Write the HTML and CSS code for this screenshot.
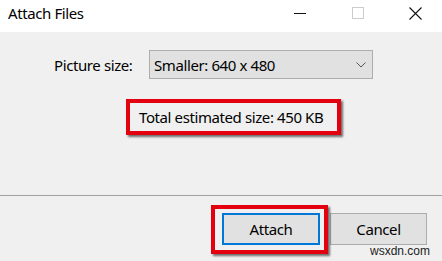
FILE: index.html
```html
<!DOCTYPE html>
<html lang="en">
<head>
<meta charset="utf-8">
<title>Attach Files</title>
<link rel="stylesheet" href="styles.css">
</head>
<body>
<div class="window">
  <header class="titlebar">
    <span class="title">Attach Files</span>
    <div class="controls">
      <span class="ctl">
        <svg width="12" height="1" viewBox="0 0 12 1"><rect x="0" y="0" width="12" height="1" fill="#111"/></svg>
      </span>
      <span class="ctl">
        <svg width="12" height="12" viewBox="0 0 12 12"><rect x="0.5" y="0.5" width="11" height="11" fill="none" stroke="#cccccc" stroke-width="1"/></svg>
      </span>
      <span class="ctl ctl-close">
        <svg width="13" height="13" viewBox="0 0 13 13"><path d="M0.5 0.5 L12.5 12.5 M12.5 0.5 L0.5 12.5" stroke="#111" stroke-width="1.1" fill="none"/></svg>
      </span>
    </div>
  </header>
  <main class="content">
    <div class="row">
      <span class="label">Picture size:</span>
      <div class="select">
        <span class="select-text">Smaller: 640 x 480</span>
        <svg class="chevron" width="10" height="6" viewBox="0 0 10 6"><path d="M0.5 0.5 L5 5 L9.5 0.5" stroke="#555" stroke-width="1" fill="none"/></svg>
      </div>
    </div>
    <div class="estimate">Total estimated size: 450 KB</div>
  </main>
  <footer class="footer">
    <span class="btn-wrap">
      <button class="btn btn-default">Attach</button>
    </span>
    <button class="btn">Cancel</button>
    <span class="watermark">wsxdn.com</span>
  </footer>
</div>
</body>
</html>
```
FILE: styles.css
```css
* { box-sizing: border-box; }
html, body { margin: 0; padding: 0; }
body {
  width: 442px;
  height: 261px;
  overflow: hidden;
  font-family: "Noto Sans", "Open Sans", sans-serif;
  font-size: 15px;
  letter-spacing: -0.4px;
  color: #000;
  background: #f0f0f0;
}
.window {
  display: flex;
  flex-direction: column;
  height: 261px;
}
.titlebar {
  height: 32px;
  flex: none;
  background: #fff;
  display: flex;
  align-items: flex-start;
  position: relative;
}
.title {
  padding-left: 8px;
  line-height: 20px;
  margin-top: 3px;
  color: #000;
}
.controls {
  margin-left: auto;
  display: flex;
}
.ctl {
  width: 58px;
  height: 26px;
  display: flex;
  align-items: center;
  justify-content: center;
}
.ctl-close { width: 55px; justify-content: flex-start; padding-left: 22px; }
.content {
  flex: 1;
  padding-top: 18px;
}
.row {
  display: flex;
  align-items: center;
  padding-left: 54px;
  height: 29px;
}
.label { width: 95px; }
.select {
  width: 224px;
  height: 29px;
  border: 1px solid #adadad;
  background: #e1e1e1;
  display: flex;
  align-items: center;
  padding-left: 4px;
  padding-right: 6px;
}
.select-text { flex: 1; }
.chevron { margin-top: 1px; }
.estimate {
  margin-top: 20px;
  margin-left: 126px;
  width: 215px;
  height: 36px;
  border: 4px solid #e3000f;
  box-shadow: 2px 2px 2px rgba(0,0,0,0.55);
  padding-left: 9px;
  display: flex;
  align-items: center;
}
.footer {
  flex: none;
  height: 66px;
  border-top: 1px solid #a0a0a0;
  display: flex;
  justify-content: flex-end;
  align-items: flex-start;
  gap: 10px;
  padding-top: 17px;
  padding-right: 15px;
  position: relative;
}
.btn {
  width: 97px;
  height: 32px;
  border: 1px solid #adadad;
  background: #e1e1e1;
  font-family: inherit;
  font-size: 15px;
  letter-spacing: -0.4px;
  color: #000;
  padding: 0;
  margin: 0;
}
.btn-default {
  border: 2px solid #0078d7;
  width: 98px;
}
.btn-wrap {
  position: relative;
  display: block;
  height: 32px;
}
.btn-wrap::after {
  content: "";
  position: absolute;
  left: -11px;
  top: -8px;
  right: -8px;
  bottom: -9px;
  border: 4px solid #e3000f;
  box-shadow: 2px 2px 2px rgba(0,0,0,0.55);
  pointer-events: none;
}
.watermark {
  position: absolute;
  right: 12px;
  top: 49px;
  line-height: 12px;
  font-family: "Liberation Sans", Arial, sans-serif;
  font-size: 12px;
  letter-spacing: 0;
  color: #222;
}
```
